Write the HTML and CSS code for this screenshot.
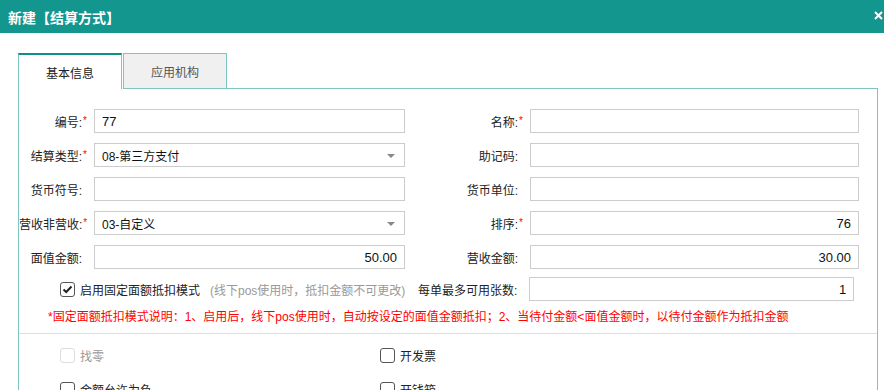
FILE: index.html
```html
<!DOCTYPE html>
<html lang="zh-CN">

<head>
    <meta charset="UTF-8">
    <meta name="viewport" content="width=device-width, initial-scale=1.0">
    <title>新建【结算方式】</title>
    <link rel="stylesheet" href="styles.css">
</head>

<body>
    <div class="dialog-header">
        <h3>新建【结算方式】</h3>
        <span class="close-btn">
            <svg width="9" height="9" viewBox="0 0 9 9"><path d="M1 1L8 8M8 1L1 8" stroke="#fff" stroke-width="2"/></svg>
        </span>
    </div>

    <div class="dialog-body">
        <div class="tabs">
            <div class="tab active">基本信息</div>
            <div class="tab">应用机构</div>
            <div class="tab-fill"></div>
        </div>

        <div class="tab-panel">
            <div class="form-grid">
                <label class="form-label">编号:<span class="req">*</span></label>
                <div class="form-input num-left">77</div>
                <label class="form-label">名称:<span class="req">*</span></label>
                <div class="form-input"></div>

                <label class="form-label">结算类型:<span class="req">*</span></label>
                <div class="form-input select">08-第三方支付<span class="caret"></span></div>
                <label class="form-label">助记码:<span class="req"></span></label>
                <div class="form-input"></div>

                <label class="form-label">货币符号:<span class="req"></span></label>
                <div class="form-input"></div>
                <label class="form-label">货币单位:<span class="req"></span></label>
                <div class="form-input"></div>

                <label class="form-label">营收非营收:<span class="req">*</span></label>
                <div class="form-input select">03-自定义<span class="caret"></span></div>
                <label class="form-label">排序:<span class="req">*</span></label>
                <div class="form-input num">76</div>

                <label class="form-label">面值金额:<span class="req"></span></label>
                <div class="form-input num">50.00</div>
                <label class="form-label">营收金额:<span class="req"></span></label>
                <div class="form-input num">30.00</div>
            </div>

            <div class="fixed-row">
                <div class="fixed-left">
                    <span class="checkbox checked">
                        <svg width="11" height="9" viewBox="0 0 11 9"><path d="M1.5 4.5L4.2 7L9.5 1.5" fill="none" stroke="#222" stroke-width="2"/></svg>
                    </span>
                    <span class="check-text">启用固定面额抵扣模式</span>
                    <span class="hint">(线下pos使用时，抵扣金额不可更改)</span>
                </div>
                <label class="form-label max-label">每单最多可用张数:</label>
                <div class="form-input num max-input">1</div>
            </div>

            <div class="note">*固定面额抵扣模式说明：1、启用后，线下pos使用时，自动按设定的面值金额抵扣；2、当待付金额&lt;面值金额时，以待付金额作为抵扣金额</div>

            <div class="divider"></div>

            <div class="option-grid">
                <div class="option disabled"><span class="checkbox"></span>找零</div>
                <div class="option"><span class="checkbox"></span>开发票</div>
                <div class="option"><span class="checkbox"></span>金额允许为负</div>
                <div class="option"><span class="checkbox"></span>开钱箱</div>
            </div>
        </div>
    </div>
</body>

</html>
```

FILE: styles.css
```css
body {
    margin: 0;
    font-family: "Liberation Sans", "Noto Sans CJK SC", sans-serif;
    font-size: 12px;
    color: #222;
    background-color: #fff;
    overflow: hidden;
}

.dialog-header {
    height: 33px;
    background-color: #12968e;
    display: flex;
    justify-content: space-between;
    align-items: center;
    padding: 0 1px 0 8px;
}

.dialog-header h3 {
    margin: 0;
    font-size: 14px;
    font-weight: bold;
    color: #fff;
}

.close-btn {
    display: flex;
    margin-top: -3px;
}

.dialog-body {
    padding: 20px 6px 0 18px;
}

.tabs {
    display: flex;
    height: 36px;
}

.tab {
    box-sizing: border-box;
    width: 104px;
    height: 36px;
    display: flex;
    align-items: center;
    justify-content: center;
    font-size: 12px;
    color: #555;
    background-color: #f0f0f0;
    border: 1px solid #7ec4c0;
    margin-left: 1px;
}

.tab.active {
    margin-left: 0;
    background-color: #fff;
    color: #222;
    border-top: 2px solid #0e8f87;
    border-bottom: none;
}

.tab-fill {
    flex: 1;
    border-bottom: 1px solid #7ec4c0;
}

.tab-panel {
    border-left: 1px solid #7ec4c0;
    border-right: 1px solid #7ec4c0;
    padding-top: 20px;
    height: 320px;
}

.form-grid {
    display: grid;
    grid-template-columns: 69px 311px 113px 329px;
    grid-auto-rows: 24px;
    column-gap: 6px;
    row-gap: 10px;
}

.form-label {
    display: flex;
    align-items: center;
    justify-content: flex-end;
    white-space: nowrap;
    color: #222;
}

.req {
    display: inline-block;
    width: 6px;
    color: #f00;
    font-size: 10px;
    align-self: flex-start;
    margin-top: 6px;
    text-align: center;
}

.form-input {
    box-sizing: border-box;
    height: 24px;
    border: 1px solid #ccc;
    padding: 0 7px;
    display: flex;
    align-items: center;
    color: #111;
    font-size: 12px;
    white-space: nowrap;
    position: relative;
}

.form-input.num,
.form-input.num-left {
    font-size: 13px;
}

.form-input.num {
    justify-content: flex-end;
}

.caret {
    position: absolute;
    right: 9px;
    top: 10px;
    border-left: 4px solid transparent;
    border-right: 4px solid transparent;
    border-top: 4px solid #888;
}

.fixed-row {
    display: flex;
    align-items: center;
    margin-top: 8px;
    height: 24px;
}

.fixed-left {
    display: flex;
    align-items: center;
    width: 399px;
    padding-left: 41px;
    box-sizing: border-box;
    white-space: nowrap;
}

.check-text {
    color: #222;
}

.hint {
    color: #999;
    margin-left: 10px;
}

.max-label {
    margin-right: 12px;
}

.max-input {
    width: 325px;
}

.checkbox {
    box-sizing: border-box;
    width: 15px;
    height: 15px;
    border: 1px solid #555;
    border-radius: 3px;
    display: inline-flex;
    align-items: center;
    justify-content: center;
    margin-right: 5px;
    background-color: #fff;
    flex-shrink: 0;
}

.note {
    color: #f00;
    padding-left: 29px;
    margin-top: 8px;
    height: 16px;
    line-height: 16px;
    white-space: nowrap;
}

.divider {
    border-top: 1px solid #ddd;
    margin-top: 8px;
}

.option-grid {
    display: grid;
    grid-template-columns: 320px 320px;
    grid-auto-rows: 20px;
    row-gap: 14px;
    padding-left: 41px;
    margin-top: 11px;
}

.option {
    display: flex;
    align-items: center;
    color: #222;
}

.option.disabled {
    color: #999;
}

.option.disabled .checkbox {
    border-color: #ddd;
}
```
